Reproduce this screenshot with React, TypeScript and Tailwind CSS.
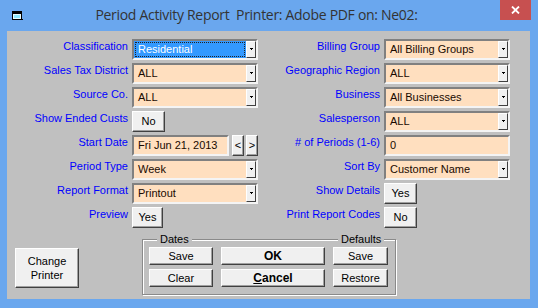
import React from "react";

const font = "font-['Liberation_Sans',Arial,sans-serif]";

function Label({ children }: { children: React.ReactNode }) {
  return (
    <div className="pt-[1px] text-right text-[11px] leading-[13px] text-[#0000ff] whitespace-nowrap">
      {children}
    </div>
  );
}

function DropBtn() {
  return (
    <div className="flex h-full w-[10px] shrink-0 items-center justify-center border border-t-white border-l-white border-r-[#404040] border-b-[#404040] bg-[#f0f0f0]">
      <svg width="5" height="3" viewBox="0 0 5 3">
        <rect x="1" y="0" width="3" height="1" fill="#000" />
        <rect x="2" y="1" width="1" height="1" fill="#000" />
      </svg>
    </div>
  );
}

function Select({ value, selected }: { value: string; selected?: boolean }) {
  return (
    <div className="flex h-[21px] w-[126px] border-2 border-t-[#808080] border-l-[#808080] border-b-[#f4f4f4] border-r-[#f4f4f4] bg-[#ffdfbf]">
      <div className={`flex flex-1 items-center px-[1px] ${selected ? "bg-[#3399ff]" : ""}`}>
        {selected ? (
          <div className="flex h-[15px] flex-1 items-center border border-dotted border-[#222] pl-[2px] text-[11px] text-white">
            {value}
          </div>
        ) : (
          <div className="pl-[3px] text-[11px] text-[#1a0a00]">{value}</div>
        )}
      </div>
      <DropBtn />
    </div>
  );
}

function TextField({ value, w = "w-[126px]" }: { value: string; w?: string }) {
  return (
    <div className={`flex h-[21px] ${w} items-center border-2 border-t-[#808080] border-l-[#808080] border-b-[#f4f4f4] border-r-[#f4f4f4] bg-[#ffdfbf] pl-[4px] text-[11px] text-[#1a0a00]`}>
      {value}
    </div>
  );
}

function Btn({ children, className = "" }: { children: React.ReactNode; className?: string }) {
  return (
    <div
      className={`flex items-center justify-center border border-t-white border-l-white border-r-[#404040] border-b-[#404040] bg-[#f0f0f0] text-[11px] text-black shadow-[inset_-1px_-1px_0_#a0a0a0] ${className}`}
    >
      {children}
    </div>
  );
}

export default function App() {
  return (
    <div className={`flex h-[308px] w-[538px] flex-col bg-[#6aa7ee] ${font}`}>
      {/* title bar */}
      <div className="relative flex h-[31px] items-center">
        <svg className="ml-[12px]" width="11" height="11" viewBox="0 0 11 11">
          <rect x="0.5" y="1.5" width="9" height="8" fill="#e8fbff" stroke="#000" />
          <rect x="1" y="2" width="8" height="2" fill="#000" />
          <rect x="2" y="5" width="6" height="3" fill="#8fe9ff" />
          <rect x="9" y="9" width="2" height="1" fill="#000" />
        </svg>
        <div className="flex-1 pr-[48px] pb-[2px] text-center font-['Open_Sans',sans-serif] text-[14px] tracking-[-0.3px] text-[#333]">
          Period Activity Report&nbsp; Printer: Adobe PDF on: Ne02:
        </div>
        <div className="absolute right-[7px] top-0 flex h-[20px] w-[31px] items-center justify-center bg-[#c75050]">
          <svg width="9" height="8" viewBox="0 0 9 8">
            <path d="M1 0.5 L8 7.5 M8 0.5 L1 7.5" stroke="#fff" strokeWidth="1.8" />
          </svg>
        </div>
      </div>

      {/* client area */}
      <div className="ml-[7px] h-[268px] w-[523px] bg-[#c0c0c0]">
        <div className="grid grid-cols-[121px_126px_118px_126px] gap-x-[4px] gap-y-[3px] pt-[8px]">
          <Label>Classification</Label>
          <Select value="Residential" selected />
          <Label>Billing Group</Label>
          <Select value="All Billing Groups" />

          <Label>Sales Tax District</Label>
          <Select value="ALL" />
          <Label>Geographic Region</Label>
          <Select value="ALL" />

          <Label>Source Co.</Label>
          <Select value="ALL" />
          <Label>Business</Label>
          <Select value="All Businesses" />

          <Label>Show Ended Custs</Label>
          <Btn className="h-[21px] w-[33px]">No</Btn>
          <Label>Salesperson</Label>
          <Select value="ALL" />

          <Label>Start Date</Label>
          <div className="flex gap-[2px]">
            <TextField value="Fri Jun 21, 2013" w="w-[97px]" />
            <Btn className="ml-[1px] h-[21px] w-[12px] text-[9px]">&lt;</Btn>
            <Btn className="h-[21px] w-[12px] text-[9px]">&gt;</Btn>
          </div>
          <Label># of Periods (1-6)</Label>
          <TextField value="0" />

          <Label>Period Type</Label>
          <Select value="Week" />
          <Label>Sort By</Label>
          <Select value="Customer Name" />

          <Label>Report Format</Label>
          <Select value="Printout" />
          <Label>Show Details</Label>
          <Btn className="h-[21px] w-[33px]">Yes</Btn>

          <Label>Preview</Label>
          <Btn className="h-[21px] w-[31px]">Yes</Btn>
          <Label>Print Report Codes</Label>
          <Btn className="h-[21px] w-[33px]">No</Btn>
        </div>

        <div className="mt-[11px] flex items-start">
          <Btn className="ml-[8px] mt-[9px] h-[40px] w-[64px] text-center leading-[14px]">
            Change
            <br />
            Printer
          </Btn>
          <div className="relative ml-[63px] h-[56px] w-[254px] border border-[#8a8a8a] shadow-[inset_1px_1px_0_#fff,1px_1px_0_#fff]">
            <span className="absolute left-[14px] top-[-8px] bg-[#c0c0c0] px-[3px] text-[11px] leading-[14px] text-black">
              Dates
            </span>
            <span className="absolute left-[195px] top-[-8px] bg-[#c0c0c0] px-[3px] text-[11px] leading-[14px] text-black">
              Defaults
            </span>
            <div className="grid grid-cols-[64px_104px_55px] gap-x-[8px] gap-y-[4px] pl-[6px] pt-[7px]">
              <Btn className="h-[18px]">Save</Btn>
              <Btn className="h-[18px] text-[12px] font-bold">OK</Btn>
              <Btn className="h-[18px]">Save</Btn>
              <Btn className="h-[18px]">Clear</Btn>
              <Btn className="h-[18px] text-[12px] font-bold">
                <span className="underline">C</span>ancel
              </Btn>
              <Btn className="h-[18px]">Restore</Btn>
            </div>
          </div>
        </div>
      </div>
    </div>
  );
}
